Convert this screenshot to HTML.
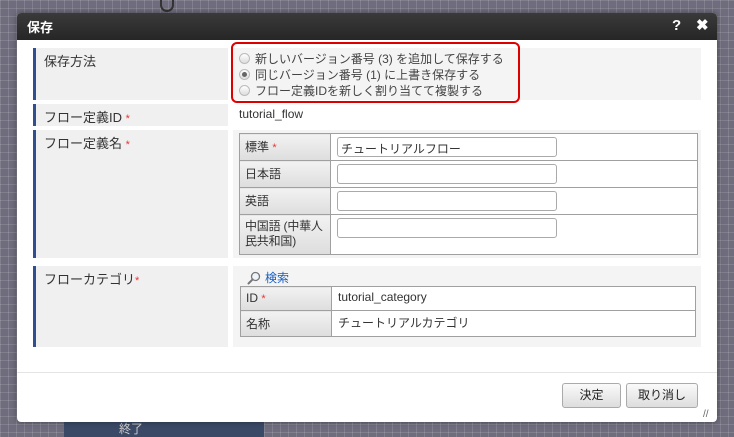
<!DOCTYPE html>
<html><head><meta charset="utf-8"><style>
*{box-sizing:border-box;margin:0;padding:0}
body{width:734px;height:437px;overflow:hidden;position:relative;font-family:"Liberation Sans","Noto Sans CJK JP",sans-serif;font-size:12px;color:#333;
background-color:#6f6d7d;background-image:linear-gradient(rgba(255,255,255,.12) 1px,transparent 1px),linear-gradient(90deg,rgba(255,255,255,.12) 1px,transparent 1px);background-size:8px 8px}
.a{position:absolute}
#dlg{left:17px;top:13px;width:700px;height:409px;background:#fff;border-radius:4px;overflow:hidden;box-shadow:0 0 6px rgba(0,0,0,.4)}
#tb{left:0;top:0;width:700px;height:27px;background:linear-gradient(#3a3a3a,#262626);color:#fff;font-weight:bold;font-size:13px;padding:4px 10px}
.lab{background:#f0f0f0;border-left:3px solid #2f4f8f;padding:3px 0 0 8px;font-size:13px}
.val{background:#f4f4f4}
.req{color:#e33;font-size:11px}
table{border-collapse:collapse;position:absolute}
td{border:1px solid #a0a0a0;font-size:12px;vertical-align:top;padding:3px 6px}
td.l{background:linear-gradient(#f2f2f2,#ddd);width:91px;padding:4px 3px 4px 5px}
td.v{background:#fff}
.in{width:220px;height:20px;border:1px solid #aaa;border-radius:3px;background:#fff;padding:2px 3px;font-size:12px}
.rad{display:flex;align-items:center;height:16px;font-size:12px;color:#444}
.rd{width:11px;height:11px;border-radius:50%;border:1px solid #bbb;background:linear-gradient(#fff,#ddd);margin-right:5px;position:relative}
.rd.on::after{content:"";position:absolute;left:2px;top:2px;width:5px;height:5px;border-radius:50%;background:#666}
.btn{border:1px solid #aaa;border-radius:3px;background:linear-gradient(#fafafa,#ddd);font-size:12px;text-align:center;line-height:22px;color:#222}
</style></head><body>
<div class="a" style="left:160px;top:0;width:14px;height:12px;border:2px solid #333;border-top:none;border-radius:0 0 8px 8px"></div>
<div class="a" style="left:64px;top:420px;width:200px;height:17px;background:#3a4a66;color:#ccc;padding-left:55px">終了</div>
<div class="a" id="dlg">
<div class="a" id="tb">保存<span class="a" style="left:655px;top:4px;font-size:15px">?</span><span class="a" style="left:679px;top:3px;font-size:15px">✖</span></div>

<div class="a lab" style="left:16px;top:35px;width:195px;height:52px">保存方法</div>
<div class="a val" style="left:216px;top:35px;width:468px;height:52px"></div>
<div class="a" style="left:214px;top:29px;width:289px;height:61px;border:2px solid #d00;border-radius:6px;padding:6px 0 0 6px">
<div class="rad"><span class="rd"></span>新しいバージョン番号 (3) を追加して保存する</div>
<div class="rad"><span class="rd on"></span>同じバージョン番号 (1) に上書き保存する</div>
<div class="rad"><span class="rd"></span>フロー定義IDを新しく割り当てて複製する</div>
</div>

<div class="a lab" style="left:16px;top:91px;width:195px;height:22px">フロー定義ID <span class="req">*</span></div>
<div class="a" style="left:222px;top:94px">tutorial_flow</div>

<div class="a lab" style="left:16px;top:117px;width:195px;height:128px">フロー定義名 <span class="req">*</span></div>
<div class="a val" style="left:216px;top:117px;width:468px;height:128px"></div>
<table style="left:222px;top:120px;width:459px">
<tr style="height:26px"><td class="l">標準 <span class="req">*</span></td><td class="v"><div class="in">チュートリアルフロー</div></td></tr>
<tr style="height:27px"><td class="l">日本語</td><td class="v"><div class="in"></div></td></tr>
<tr style="height:26px"><td class="l">英語</td><td class="v"><div class="in"></div></td></tr>
<tr style="height:40px"><td class="l" style="line-height:15px;letter-spacing:-0.2px">中国語 (中華人<br>民共和国)</td><td class="v"><div class="in"></div></td></tr>
</table>

<div class="a lab" style="left:16px;top:253px;width:195px;height:81px">フローカテゴリ<span class="req">*</span></div>
<div class="a val" style="left:216px;top:253px;width:468px;height:81px"></div>
<div class="a" style="left:230px;top:256px;color:#1a5fc0;display:flex;align-items:center">
<svg width="14" height="14" viewBox="0 0 14 14" style="margin-right:4px"><circle cx="8.5" cy="5.5" r="4" fill="#eef4fb" stroke="#777" stroke-width="1.3"/><path d="M5.6 8.4 L1.5 12.5" stroke="#777" stroke-width="2" stroke-linecap="round"/></svg>検索</div>
<table style="left:223px;top:273px;width:456px">
<tr style="height:24px"><td class="l">ID <span class="req">*</span></td><td class="v">tutorial_category</td></tr>
<tr style="height:24px"><td class="l">名称</td><td class="v">チュートリアルカテゴリ</td></tr>
</table>

<div class="a" style="left:0;top:359px;width:700px;height:1px;background:#e4e4e4"></div>
<div class="a btn" style="left:545px;top:370px;width:59px;height:25px">決定</div>
<div class="a btn" style="left:609px;top:370px;width:72px;height:25px">取り消し</div>
<div class="a" style="left:686px;top:396px;color:#666;font-size:10px">//</div>
</div>
</body></html>
